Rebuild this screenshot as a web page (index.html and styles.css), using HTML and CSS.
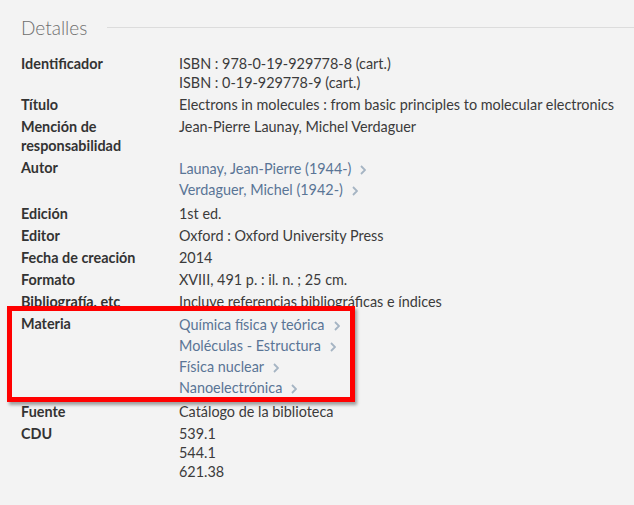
FILE: index.html
```html
<!DOCTYPE html>
<html lang="es">
<head>
<meta charset="utf-8">
<title>Detalles</title>
<link rel="stylesheet" href="styles.css">
</head>
<body>
<section class="details">
  <div class="details-head">
    <h2 class="details-title">Detalles</h2>
    <span class="details-rule"></span>
  </div>
  <div class="fields">
    <div class="field">
      <div class="label">Identificador</div>
      <div class="values">
        <div class="val">ISBN : 978-0-19-929778-8 (cart.)</div>
        <div class="val">ISBN : 0-19-929778-9 (cart.)</div>
      </div>
    </div>
    <div class="field">
      <div class="label">Título</div>
      <div class="values"><div class="val">Electrons in molecules : from basic principles to molecular electronics</div></div>
    </div>
    <div class="field">
      <div class="label">Mención de responsabilidad</div>
      <div class="values"><div class="val">Jean-Pierre Launay, Michel Verdaguer</div></div>
    </div>
    <div class="field field-links">
      <div class="label">Autor</div>
      <div class="values">
        <a class="link" href="#">Launay, Jean-Pierre (1944-)<svg class="chev" viewBox="0 0 6 10" width="6" height="10"><path d="M1 1l4 4-4 4"/></svg></a>
        <a class="link" href="#">Verdaguer, Michel (1942-)<svg class="chev" viewBox="0 0 6 10" width="6" height="10"><path d="M1 1l4 4-4 4"/></svg></a>
      </div>
    </div>
    <div class="field">
      <div class="label">Edición</div>
      <div class="values"><div class="val">1st ed.</div></div>
    </div>
    <div class="field">
      <div class="label">Editor</div>
      <div class="values"><div class="val">Oxford : Oxford University Press</div></div>
    </div>
    <div class="field">
      <div class="label">Fecha de creación</div>
      <div class="values"><div class="val">2014</div></div>
    </div>
    <div class="field">
      <div class="label">Formato</div>
      <div class="values"><div class="val">XVIII, 491 p. : il. n. ; 25 cm.</div></div>
    </div>
    <div class="field">
      <div class="label">Bibliografía, etc</div>
      <div class="values"><div class="val">Incluye referencias bibliográficas e índices</div></div>
    </div>
    <div class="field field-links field-marked">
      <div class="label">Materia</div>
      <div class="values">
        <a class="link" href="#">Química física y teórica<svg class="chev" viewBox="0 0 6 10" width="6" height="10"><path d="M1 1l4 4-4 4"/></svg></a>
        <a class="link" href="#">Moléculas - Estructura<svg class="chev" viewBox="0 0 6 10" width="6" height="10"><path d="M1 1l4 4-4 4"/></svg></a>
        <a class="link" href="#">Física nuclear<svg class="chev" viewBox="0 0 6 10" width="6" height="10"><path d="M1 1l4 4-4 4"/></svg></a>
        <a class="link" href="#">Nanoelectrónica<svg class="chev" viewBox="0 0 6 10" width="6" height="10"><path d="M1 1l4 4-4 4"/></svg></a>
      </div>
      <span class="mark-box"></span>
    </div>
    <div class="field">
      <div class="label">Fuente</div>
      <div class="values"><div class="val">Catálogo de la biblioteca</div></div>
    </div>
    <div class="field">
      <div class="label">CDU</div>
      <div class="values">
        <div class="val">539.1</div>
        <div class="val">544.1</div>
        <div class="val">621.38</div>
      </div>
    </div>
  </div>
</section>
</body>
</html>
```
FILE: styles.css
```css
html, body {
  margin: 0;
  padding: 0;
  background: #f3f3f3;
}
body {
  font-family: Lato, "Open Sans", "Liberation Sans", sans-serif;
  font-size: 14.4px;
  color: #3b3b3b;
}
.details {
  padding: 15px 0 0 21px;
}
.details-head {
  display: flex;
  align-items: center;
  gap: 20px;
  margin-bottom: 13px;
}
.details-title {
  margin: 0;
  font-weight: 300;
  font-size: 19px;
  line-height: 26px;
  color: #6f6f6f;
}
.details-rule {
  flex: 1;
  height: 1px;
  background: #dcdcdc;
  margin-top: -2px;
}
.fields {
  display: flex;
  flex-direction: column;
  gap: 3px;
}
.field {
  display: grid;
  grid-template-columns: 158px 1fr;
  line-height: 19px;
}
.label {
  font-weight: 700;
  color: #333;
  padding-right: 10px;
}
.values {
  display: flex;
  flex-direction: column;
  align-items: flex-start;
}
.field-links {
  padding-bottom: 1px;
}
.link {
  display: flex;
  align-items: center;
  height: 21px;
  color: #5a7596;
  text-decoration: none;
}
.chev {
  margin-left: 9px;
  margin-top: 2px;
  fill: none;
  stroke: #a5b4c3;
  stroke-width: 1.8;
}
.field-marked {
  position: relative;
}
.mark-box {
  position: absolute;
  left: -14px;
  top: -8px;
  width: 348px;
  height: 96px;
  box-sizing: border-box;
  border: 5px solid #ff0000;
  box-shadow: 2px 3px 3px rgba(0, 0, 0, 0.35);
  pointer-events: none;
}
```
